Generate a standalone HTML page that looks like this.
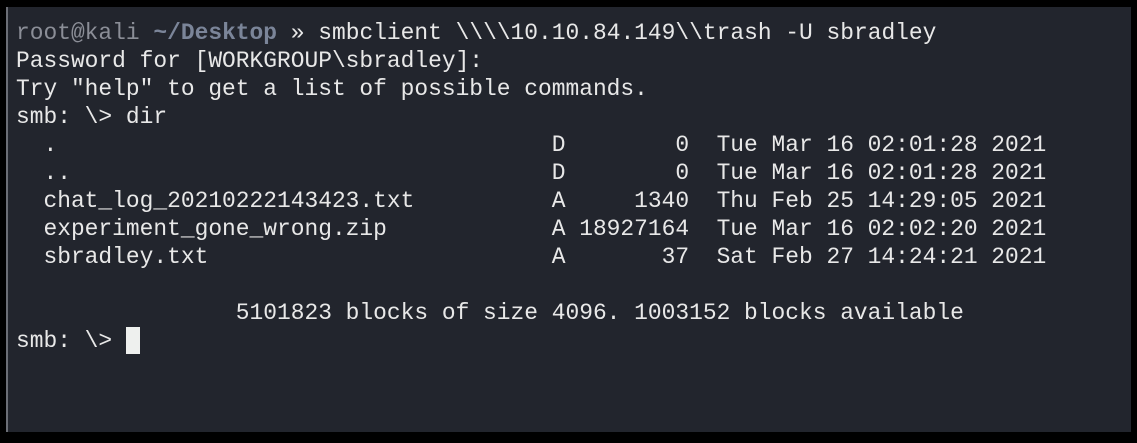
<!DOCTYPE html>
<html><head><meta charset="utf-8"><style>
html,body{margin:0;padding:0;background:#000;}
body{width:1137px;height:443px;position:relative;overflow:hidden;}
.term{position:absolute;left:6px;top:7px;width:1125px;height:425px;background:#22252d;border-left:2px solid #6b6e76;box-sizing:border-box;}
pre{position:absolute;left:8px;top:12px;margin:0;font-family:"Liberation Mono",monospace;font-size:22.9px;line-height:28px;color:#e8e8e8;}
.g{color:#8b8e97}.b{color:#7b8599;font-weight:bold}
.cur{position:absolute;left:118px;top:320px;width:14px;height:27px;background:#eef0ee;}
</style></head><body>
<div class="term">
<pre><span class="g">root@kali</span> <span class="b">~/Desktop</span> » smbclient \\\\10.10.84.149\\trash -U sbradley
Password for [WORKGROUP\sbradley]:
Try "help" to get a list of possible commands.
smb: \&gt; dir
  .                                    D        0  Tue Mar 16 02:01:28 2021
  ..                                   D        0  Tue Mar 16 02:01:28 2021
  chat_log_20210222143423.txt          A     1340  Thu Feb 25 14:29:05 2021
  experiment_gone_wrong.zip            A 18927164  Tue Mar 16 02:02:20 2021
  sbradley.txt                         A       37  Sat Feb 27 14:24:21 2021

                5101823 blocks of size 4096. 1003152 blocks available
smb: \&gt; </pre>
<div class="cur"></div>
</div>
</body></html>
